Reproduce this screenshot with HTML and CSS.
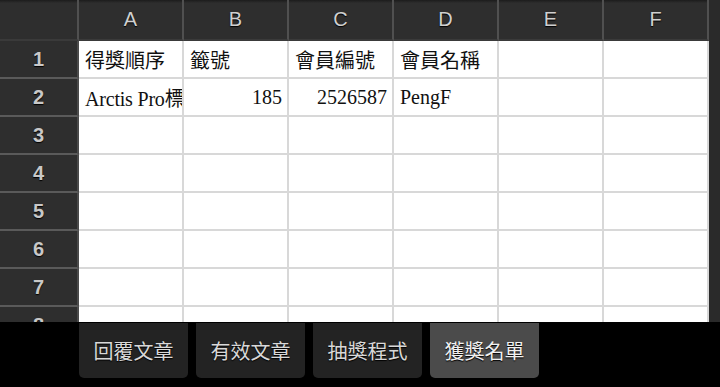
FILE: index.html
```
<!doctype html>
<html>
<head>
	<meta charset="utf-8">
	<title>獲獎名單</title>
	<link rel="stylesheet" href="styles.css">
</head>
<body>
	<!-- 試算表 -->
	<div class="sheet">
		<table class="grid">
			<tr class="head">
				<th class="corner"></th>
				<th>A</th><th>B</th><th>C</th><th>D</th><th>E</th><th>F</th>
			</tr>
			<tr>
				<th>1</th>
				<td>得獎順序</td><td>籤號</td><td>會員編號</td><td>會員名稱</td><td></td><td></td>
			</tr>
			<tr>
				<th>2</th>
				<td class="clip">Arctis Pro標</td><td class="num">185</td><td class="num">2526587</td><td>PengF</td><td></td><td></td>
			</tr>
			<tr><th>3</th><td></td><td></td><td></td><td></td><td></td><td></td></tr>
			<tr><th>4</th><td></td><td></td><td></td><td></td><td></td><td></td></tr>
			<tr><th>5</th><td></td><td></td><td></td><td></td><td></td><td></td></tr>
			<tr><th>6</th><td></td><td></td><td></td><td></td><td></td><td></td></tr>
			<tr><th>7</th><td></td><td></td><td></td><td></td><td></td><td></td></tr>
			<tr><th>8</th><td></td><td></td><td></td><td></td><td></td><td></td></tr>
		</table>
		<div class="behind"></div>
	</div>
	<!-- 頁籤 -->
	<div class="tabs">
		<span class="tab">回覆文章</span>
		<span class="tab">有效文章</span>
		<span class="tab">抽獎程式</span>
		<span class="tab current">獲獎名單</span>
	</div>
</body>
</html>
```
FILE: styles.css
```
html,body{margin:0;padding:0;}
body{
	width:720px;
	height:387px;
	overflow:hidden;
	background:#000;
	font-family:"Liberation Serif","Noto Sans CJK TC",serif;
}
/* 試算表 */
.sheet{
	height:322px;
	overflow:hidden;
	display:flex;
	background:#262626;
}
.grid{
	border-collapse:separate;
	border-spacing:0;
	table-layout:fixed;
	width:709px;
	flex:none;
}
.grid th{
	background:#2e2e2e;
	color:#c8c8c8;
	font-family:"Liberation Sans","Noto Sans CJK TC",sans-serif;
	font-size:20px;
	font-weight:bold;
	text-shadow:0 1px 1px #000;
	width:77px;
	height:36px;
	padding:0;
	border-right:2px solid #4a4a4a;
	border-bottom:2px solid #5a5a5a;
	text-align:center;
	vertical-align:middle;
}
.grid tr.head th{
	width:103px;
	height:39px;
	font-weight:normal;
	font-size:20px;
	color:#d0d0d0;
	background:linear-gradient(#1c1c1c,#2e2e2e 8%,#2e2e2e);
	border-right:2px solid #505050;
	border-bottom:2px solid #3a3a3a;
}
.grid tr.head th.corner{width:77px;}
.grid td{
	background:#fff;
	color:#111;
	font-size:20px;
	height:36px;
	padding:0 5px 0 6px;
	border-right:2px solid #d8d8d8;
	border-bottom:2px solid #d8d8d8;
	white-space:nowrap;
	overflow:hidden;
	vertical-align:middle;
}
.grid td.num{text-align:right;}
.grid td.clip{padding-right:0;letter-spacing:-0.2px;}
/* 右邊被遮住的頁面 */
.behind{
	flex:1;
	background:#2a2a2a;
}
/* 頁籤 */
.tabs{
	display:flex;
	gap:8px;
	padding:1px 0 0 79px;
}
.tab{
	width:109px;
	height:55px;
	display:flex;
	align-items:center;
	justify-content:center;
	background:#232323;
	border-radius:0 0 5px 5px;
	color:#d8d8d8;
	font-family:"Noto Sans CJK TC",sans-serif;
	font-size:20px;
	text-shadow:0 1px 1px #000;
}
.tab.current{
	background:#4b4b4b;
	color:#f0f0f0;
}
```
